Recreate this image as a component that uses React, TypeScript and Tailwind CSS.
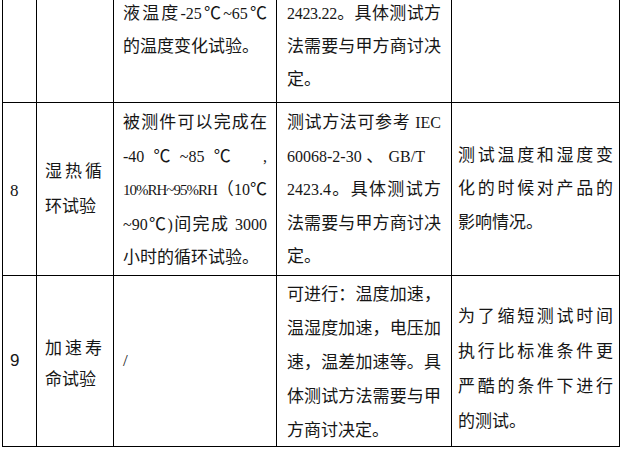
import React from "react";

const J = "text-justify [text-align-last:justify]";

function E({ children, className = "text-[16px]" }: { children: React.ReactNode; className?: string }) {
  return <span className={className}>{children}</span>;
}

export default function App() {
  return (
    <div className="w-[622px] h-[450px] overflow-hidden bg-white text-[#161616] text-[17px] [font-family:'Liberation_Serif','Noto_Sans_CJK_SC',serif]">
      <div className="-mt-[3px] ml-[2px] w-[618px] grid grid-cols-[33px_76px_162px_174px_167px] grid-rows-[105px_172px_170px] gap-[1px] bg-black px-[1px] pb-[1px]">
        {/* Row 7 (clipped) */}
        <div className="bg-white" />
        <div className="bg-white" />
        <div className="bg-white pl-[9px] pr-[9px] leading-[33px]">
          <div className={J}>
            液温度<E>-25</E>℃<E>~65</E>℃
          </div>
          <div>的温度变化试验。</div>
        </div>
        <div className="bg-white pl-[10px] pr-[10px] leading-[33px]">
          <div className={J}>
            <E className="text-[16px] tracking-[-0.3px]">2423.22</E>。具体测试方
          </div>
          <div className={J}>法需要与甲方商讨决</div>
          <div>定。</div>
        </div>
        <div className="bg-white" />

        {/* Row 8 */}
        <div className="bg-white flex items-center pl-[7px] pt-[3px]">
          <span>8</span>
        </div>
        <div className="bg-white flex flex-col justify-center pl-[8px] pr-[11px] leading-[35px]">
          <div className={J}>湿热循</div>
          <div>环试验</div>
        </div>
        <div className="bg-white pl-[9px] pr-[9px] pt-[3px] leading-[33.5px]">
          <div className={J}>被测件可以完成在</div>
          <div className="flex justify-between">
            <span className="[word-spacing:5px]">
              <E>-40</E> ℃ <E>~85</E> ℃
            </span>
            <E>,</E>
          </div>
          <div className={J}>
            <E className="text-[15px] tracking-[-1px]">10%RH~95%RH</E>（<E>10</E>℃
          </div>
          <div className={J}>
            <E>~90</E>℃<E>)</E>间完成 <E>3000</E>
          </div>
          <div>小时的循环试验。</div>
        </div>
        <div className="bg-white pl-[10px] pr-[10px] pt-[3px] leading-[33.5px]">
          <div className={J}>
            测试方法可参考 <E>IEC</E>
          </div>
          <div className={J + " mr-[16px]"}>
            <E>60068-2-30</E> 、 <E>GB/T</E>
          </div>
          <div className={J}>
            <E>2423.4</E>。具体测试方
          </div>
          <div className={J}>法需要与甲方商讨决</div>
          <div>定。</div>
        </div>
        <div className="bg-white flex flex-col justify-center pl-[6px] pr-[6px] leading-[33.5px]">
          <div className={J}>测试温度和湿度变</div>
          <div className={J}>化的时候对产品的</div>
          <div>影响情况。</div>
        </div>

        {/* Row 9 */}
        <div className="bg-white flex items-center pl-[7px] [font-family:'Liberation_Sans',sans-serif]">
          <span>9</span>
        </div>
        <div className="bg-white pl-[8px] pr-[11px] pt-[57px] leading-[31px]">
          <div className={J}>加速寿</div>
          <div>命试验</div>
        </div>
        <div className="bg-white flex items-center pl-[9px]">
          <span>/</span>
        </div>
        <div className="bg-white pl-[10px] pr-[10px] pt-[2px] leading-[34px]">
          <div className={J}>可进行：温度加速，</div>
          <div className={J}>温湿度加速，电压加</div>
          <div className={J}>速，温差加速等。具</div>
          <div className={J}>体测试方法需要与甲</div>
          <div>方商讨决定。</div>
        </div>
        <div className="bg-white pl-[6px] pr-[6px] pt-[23px] leading-[35px]">
          <div className={J}>为了缩短测试时间</div>
          <div className={J}>执行比标准条件更</div>
          <div className={J}>严酷的条件下进行</div>
          <div>的测试。</div>
        </div>
      </div>
    </div>
  );
}
